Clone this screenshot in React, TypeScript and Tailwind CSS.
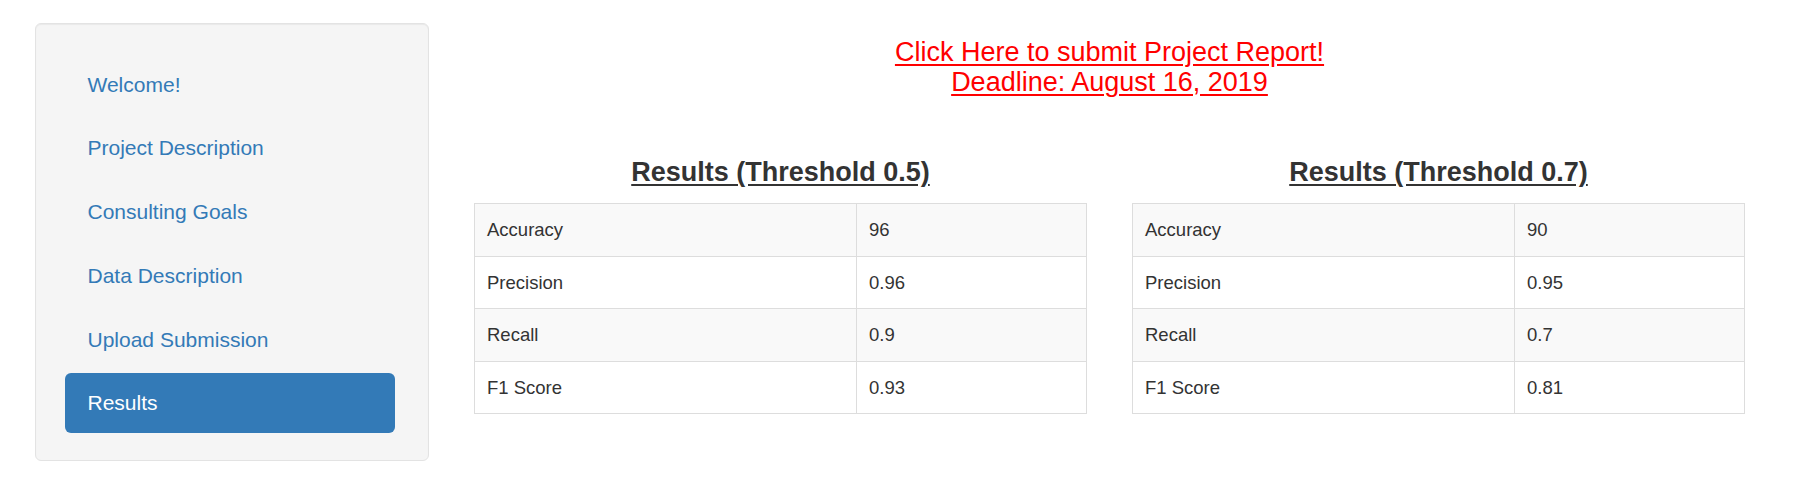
import React from "react";

const navItems = [
  "Welcome!",
  "Project Description",
  "Consulting Goals",
  "Data Description",
  "Upload Submission",
  "Results",
];

type Row = [string, string];

function ResultsTable({ title, rows }: { title: string; rows: Row[] }) {
  return (
    <div className="w-[613px] flex flex-col">
      <h4 className="text-center text-[27px] leading-[29.7px] font-bold text-[#333333] mb-[15px]">
        <span className="underline underline-offset-[3px]">{title}</span>
      </h4>
      <table className="w-full border-collapse border border-[#dddddd] text-[18.5px] text-[#333333]">
        <tbody>
          {rows.map((r, i) => (
            <tr key={r[0]} className={i % 2 === 0 ? "bg-[#f9f9f9]" : "bg-white"}>
              <td className="w-[382px] border border-[#dddddd] px-[12px] py-[12px] leading-[27.5px]">
                {r[0]}
              </td>
              <td className="border border-[#dddddd] px-[12px] py-[12px] leading-[27.5px]">
                {r[1]}
              </td>
            </tr>
          ))}
        </tbody>
      </table>
    </div>
  );
}

export default function App() {
  return (
    <div
      className="flex items-start bg-white pt-[23px] pl-[35px] min-h-[481px]"
      style={{ fontFamily: '"Liberation Sans", Arial, sans-serif' }}
    >
      <div className="w-[394px] shrink-0 rounded-[6px] border border-[#e3e3e3] bg-[#f5f5f5] pt-[30px] pb-[27px] pl-[29px] shadow-[inset_0_1px_1px_rgba(0,0,0,0.05)]">
        <ul className="flex flex-col gap-[3.3px]">
          {navItems.map((item) => (
            <li
              key={item}
              className={
                item === "Results"
                  ? "w-[330px] h-[60.5px] flex items-center pl-[22.5px] rounded-[6px] bg-[#337ab7] text-white text-[21px]"
                  : "w-[330px] h-[60.5px] flex items-center pl-[22.5px] rounded-[6px] text-[#337ab7] text-[21px]"
              }
            >
              {item}
            </li>
          ))}
        </ul>
      </div>

      <div className="ml-[45px] w-[1271px] flex flex-col">
        <h4 className="mt-[15px] text-center text-[27px] leading-[29.7px]">
          <a className="text-[#ff0000] underline underline-offset-[3px]" href="#">
            Click Here to submit Project Report!
            <br />
            Deadline: August 16, 2019
          </a>
        </h4>
        <div className="mt-[61px] flex gap-[45px]">
          <ResultsTable
            title="Results (Threshold 0.5)"
            rows={[
              ["Accuracy", "96"],
              ["Precision", "0.96"],
              ["Recall", "0.9"],
              ["F1 Score", "0.93"],
            ]}
          />
          <ResultsTable
            title="Results (Threshold 0.7)"
            rows={[
              ["Accuracy", "90"],
              ["Precision", "0.95"],
              ["Recall", "0.7"],
              ["F1 Score", "0.81"],
            ]}
          />
        </div>
      </div>
    </div>
  );
}
